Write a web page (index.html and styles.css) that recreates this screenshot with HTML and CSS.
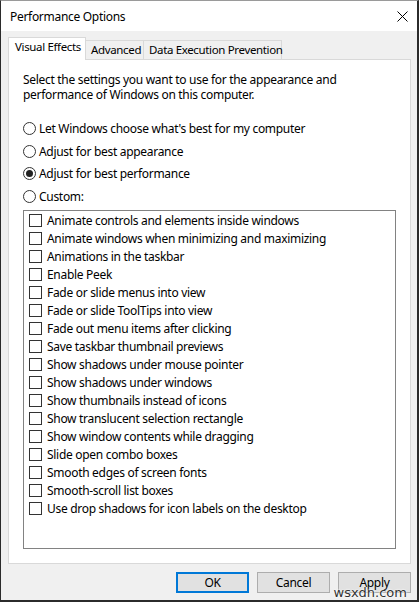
FILE: index.html
```html
<!DOCTYPE html>
<html>
<head>
<meta charset="utf-8">
<title>Performance Options</title>
<link rel="stylesheet" href="styles.css">
</head>
<body>
<div class="window">
  <div class="titlebar">
    <span class="title">Performance Options</span>
    <svg class="close" width="11" height="11" viewBox="0 0 11 11"><path d="M0.5 0.5 L10.5 10.5 M10.5 0.5 L0.5 10.5" stroke="#000" stroke-width="1" fill="none"/></svg>
  </div>
  <div class="body">
    <div class="tabs">
      <div class="tab active tab-ve">Visual Effects</div>
      <div class="tab tab-adv">Advanced</div>
      <div class="tab tab-dep">Data Execution Prevention</div>
    </div>
    <div class="panel">
      <p class="intro">Select the settings you want to use for the appearance and performance of Windows on this computer.</p>
      <div class="radios">
        <div class="radio-row"><span class="radio"></span>Let Windows choose what's best for my computer</div>
        <div class="radio-row"><span class="radio"></span>Adjust for best appearance</div>
        <div class="radio-row"><span class="radio checked"></span>Adjust for best performance</div>
        <div class="radio-row"><span class="radio"></span>Custom:</div>
      </div>
      <div class="listbox">
        <div class="check-row"><span class="box"></span>Animate controls and elements inside windows</div>
        <div class="check-row"><span class="box"></span>Animate windows when minimizing and maximizing</div>
        <div class="check-row"><span class="box"></span>Animations in the taskbar</div>
        <div class="check-row"><span class="box"></span>Enable Peek</div>
        <div class="check-row"><span class="box"></span>Fade or slide menus into view</div>
        <div class="check-row"><span class="box"></span>Fade or slide ToolTips into view</div>
        <div class="check-row"><span class="box"></span>Fade out menu items after clicking</div>
        <div class="check-row"><span class="box"></span>Save taskbar thumbnail previews</div>
        <div class="check-row"><span class="box"></span>Show shadows under mouse pointer</div>
        <div class="check-row"><span class="box"></span>Show shadows under windows</div>
        <div class="check-row"><span class="box"></span>Show thumbnails instead of icons</div>
        <div class="check-row"><span class="box"></span>Show translucent selection rectangle</div>
        <div class="check-row"><span class="box"></span>Show window contents while dragging</div>
        <div class="check-row"><span class="box"></span>Slide open combo boxes</div>
        <div class="check-row"><span class="box"></span>Smooth edges of screen fonts</div>
        <div class="check-row"><span class="box"></span>Smooth-scroll list boxes</div>
        <div class="check-row"><span class="box"></span>Use drop shadows for icon labels on the desktop</div>
      </div>
    </div>
    <div class="buttons">
      <div class="btn default">OK</div>
      <div class="btn">Cancel</div>
      <div class="btn">Apply</div>
    </div>
  </div>
  <div class="watermark">wsxdn.com</div>
</div>
</body>
</html>
```
FILE: styles.css
```css
* { box-sizing: border-box; }
html, body { margin: 0; padding: 0; }
body {
  font-family: "Noto Sans", "Open Sans", sans-serif;
  font-size: 12px;
  letter-spacing: -0.3px;
  color: #000;
  background: #fff;
}
.window {
  position: relative;
  width: 419px;
  height: 602px;
  border-left: 1px solid #2b2b2b;
  border-right: 2px solid #2b2b2b;
  border-bottom: 2px solid #2b2b2b;
  border-top: 1px solid #9a9a9a;
  display: flex;
  flex-direction: column;
  background: #f0f0f0;
}
.titlebar {
  height: 30px;
  background: #fff;
  display: flex;
  align-items: center;
  justify-content: space-between;
  padding: 0 9px 0 9px;
  flex: none;
}
.title { font-size: 12px; }
.body {
  flex: 1;
  display: flex;
  flex-direction: column;
  padding: 6px 6px 0 7px;
}
.tabs {
  display: flex;
  align-items: flex-end;
  height: 22px;
  position: relative;
  z-index: 1;
}
.tab {
  height: 19px;
  border: 1px solid #d9d9d9;
  border-bottom: none;
  border-left: none;
  padding: 0 0 0 5px;
  line-height: 17px;
  background: #f0f0f0;
  white-space: nowrap;
  font-size: 11.5px;
  letter-spacing: -0.35px;
}
.tab.active {
  height: 23px;
  margin-bottom: -1px;
  background: #fff;
  border-left: 1px solid #d9d9d9;
  padding-left: 6px;
  line-height: 18px;
}
.tab-ve { width: 78px; }
.tab-adv { width: 58px; }
.tab-dep { width: 138px; }
.panel {
  background: #fff;
  border: 1px solid #d9d9d9;
  height: 505px;
  width: 403px;
  padding: 12px 13px 0 14px;
  display: flex;
  flex-direction: column;
}
.intro {
  margin: 0;
  line-height: 15px;
  width: 330px;
}
.radios {
  margin-top: 15px;
  display: flex;
  flex-direction: column;
}
.radio-row {
  height: 22.7px;
  display: flex;
  align-items: center;
}
.radio {
  width: 13px;
  height: 13px;
  border: 1px solid #333;
  border-radius: 50%;
  margin-right: 3px;
  display: flex;
  align-items: center;
  justify-content: center;
  flex: none;
}
.radio.checked::after {
  content: "";
  width: 7px;
  height: 7px;
  border-radius: 50%;
  background: #222;
}
.listbox {
  margin-top: 2px;
  width: 373px;
  height: 339px;
  border: 1px solid #828282;
  padding-top: 1px;
}
.check-row {
  height: 18px;
  display: flex;
  align-items: center;
  padding-left: 5px;
}
.box {
  width: 13px;
  height: 13px;
  border: 1px solid #333;
  margin-right: 5px;
  flex: none;
}
.buttons {
  display: flex;
  justify-content: flex-end;
  gap: 8px;
  margin-top: 8px;
}
.btn {
  width: 73px;
  height: 21px;
  background: #e1e1e1;
  border: 1px solid #adadad;
  display: flex;
  align-items: center;
  justify-content: center;
}
.btn.default {
  border: 2px solid #0078d7;
}
.watermark {
  position: absolute;
  right: 10px;
  bottom: 0px;
  font-family: "DejaVu Sans", sans-serif;
  font-size: 13px;
  letter-spacing: 0;
  color: #333;
  text-shadow: 0 0 2px #fff, 0 0 2px #fff;
}
```
